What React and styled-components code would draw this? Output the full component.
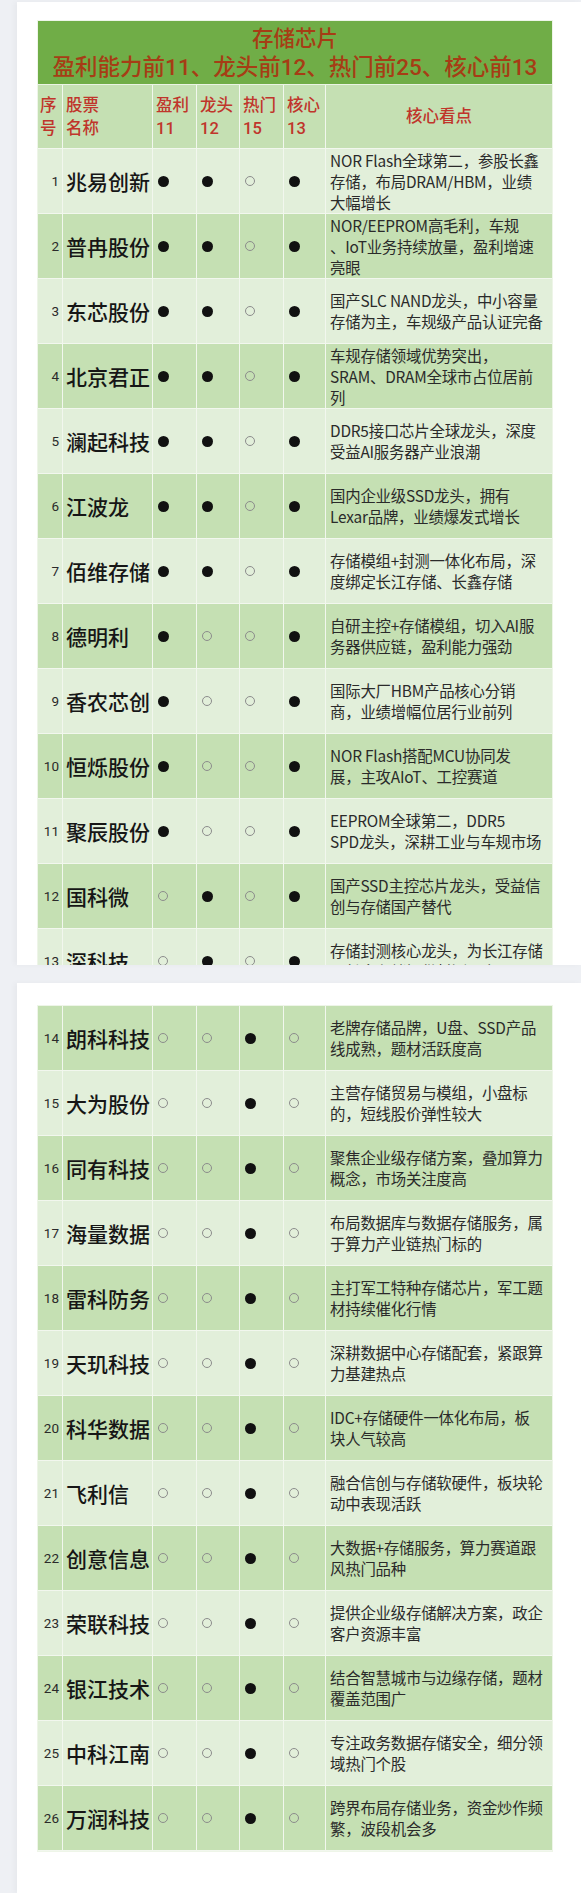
import React from "react";
import styled, { createGlobalStyle } from "styled-components";

const Global = createGlobalStyle`
  html, body { margin: 0; padding: 0; background: #eef0f4; }
  body { font-family: Roboto, "Noto Sans CJK SC", sans-serif; }
`;

const Page = styled.div`
  width: 581px;
  padding: 2px 0 0 17px;
  box-sizing: border-box;
  display: flex;
  flex-direction: column;
  gap: 18px;
`;

const Panel = styled.section`
  background: #ffffff;
  height: ${(p) => p.$h}px;
  overflow: hidden;
  padding: ${(p) => p.$top}px 0 0 20px;
  box-sizing: border-box;
  box-shadow: -3px 0 5px rgba(0, 0, 0, 0.03);
`;

const Table = styled.div`
  width: 516px;
  border: 1px solid #eef5e8;
  box-sizing: border-box;
`;

const TitleBand = styled.div`
  background: #70ad47;
  height: 64px;
  display: flex;
  flex-direction: column;
  align-items: center;
  justify-content: center;
  color: #a63d15;
  font-family: Roboto, "Noto Sans CJK SC", sans-serif;
  font-weight: 500;
  border-bottom: 1px solid #eaf3e3;
  box-sizing: border-box;
`;

const TitleLine = styled.div`
  font-size: ${(p) => p.$size}px;
  line-height: 28px;
  white-space: nowrap;
`;

const Row = styled.div`
  display: grid;
  grid-template-columns: 25px 90px 44px 43px 44px 42px 1fr;
  height: ${(p) => p.$h || 65}px;
  background: ${(p) => (p.$light ? "#e2efda" : "#c5e0b3")};
  border-bottom: 1px solid #f2f7ee;
  box-sizing: border-box;
`;

const Cell = styled.div`
  border-right: 1px solid #f2f7ee;
  box-sizing: border-box;
  display: flex;
  align-items: center;
  overflow: hidden;
  &:last-child { border-right: none; }
`;

const HeadCell = styled(Cell)`
  color: #c0352b;
  font-size: 16.5px;
  font-weight: 500;
  line-height: 23px;
  padding-left: ${(p) => p.$pad ?? 3}px;
  justify-content: ${(p) => (p.$center ? "center" : "flex-start")};
  white-space: pre-line;
`;

const IndexCell = styled(Cell)`
  justify-content: flex-end;
  padding-right: 3px;
  font-size: 13.5px;
  color: #2a2a2a;
`;

const NameCell = styled(Cell)`
  padding-left: 3px;
  font-family: "Noto Sans CJK SC", sans-serif;
  font-size: 21px;
  font-weight: 500;
  color: #161616;
  white-space: nowrap;
`;

const MarkCell = styled(Cell)`
  padding-left: 5px;
`;

const Dot = styled.span`
  display: block;
  box-sizing: border-box;
  border-radius: 50%;
  width: ${(p) => (p.$on ? 11 : 10)}px;
  height: ${(p) => (p.$on ? 11 : 10)}px;
  background: ${(p) => (p.$on ? "#111" : "transparent")};
  border: ${(p) => (p.$on ? "none" : "1.2px solid #8c8c8c")};
`;

const NoteCell = styled(Cell)`
  padding: 0 3px 0 4px;
  flex-direction: column;
  align-items: flex-start;
  justify-content: center;
  font-family: "Noto Sans CJK SC", Roboto, sans-serif;
  font-size: 15.4px;
  line-height: 21px;
  color: #2a2a2a;
  letter-spacing: -0.2px;
`;

const NoteLine = styled.div`
  white-space: nowrap;
`;

const rows = [
  [1, "兆易创新", "1101", ["NOR Flash全球第二，参股长鑫", "存储，布局DRAM/HBM，业绩", "大幅增长"]],
  [2, "普冉股份", "1101", ["NOR/EEPROM高毛利，车规", "、IoT业务持续放量，盈利增速", "亮眼"]],
  [3, "东芯股份", "1101", ["国产SLC NAND龙头，中小容量", "存储为主，车规级产品认证完备"]],
  [4, "北京君正", "1101", ["车规存储领域优势突出，", "SRAM、DRAM全球市占位居前", "列"]],
  [5, "澜起科技", "1101", ["DDR5接口芯片全球龙头，深度", "受益AI服务器产业浪潮"]],
  [6, "江波龙", "1101", ["国内企业级SSD龙头，拥有", "Lexar品牌，业绩爆发式增长"]],
  [7, "佰维存储", "1101", ["存储模组+封测一体化布局，深", "度绑定长江存储、长鑫存储"]],
  [8, "德明利", "1001", ["自研主控+存储模组，切入AI服", "务器供应链，盈利能力强劲"]],
  [9, "香农芯创", "1001", ["国际大厂HBM产品核心分销", "商，业绩增幅位居行业前列"]],
  [10, "恒烁股份", "1001", ["NOR Flash搭配MCU协同发", "展，主攻AIoT、工控赛道"]],
  [11, "聚辰股份", "1001", ["EEPROM全球第二，DDR5", "SPD龙头，深耕工业与车规市场"]],
  [12, "国科微", "0101", ["国产SSD主控芯片龙头，受益信", "创与存储国产替代"]],
  [13, "深科技", "0101", ["存储封测核心龙头，为长江存储", "、长鑫存储提供封测配套"]],
  [14, "朗科科技", "0010", ["老牌存储品牌，U盘、SSD产品", "线成熟，题材活跃度高"]],
  [15, "大为股份", "0010", ["主营存储贸易与模组，小盘标", "的，短线股价弹性较大"]],
  [16, "同有科技", "0010", ["聚焦企业级存储方案，叠加算力", "概念，市场关注度高"]],
  [17, "海量数据", "0010", ["布局数据库与数据存储服务，属", "于算力产业链热门标的"]],
  [18, "雷科防务", "0010", ["主打军工特种存储芯片，军工题", "材持续催化行情"]],
  [19, "天玑科技", "0010", ["深耕数据中心存储配套，紧跟算", "力基建热点"]],
  [20, "科华数据", "0010", ["IDC+存储硬件一体化布局，板", "块人气较高"]],
  [21, "飞利信", "0010", ["融合信创与存储软硬件，板块轮", "动中表现活跃"]],
  [22, "创意信息", "0010", ["大数据+存储服务，算力赛道跟", "风热门品种"]],
  [23, "荣联科技", "0010", ["提供企业级存储解决方案，政企", "客户资源丰富"]],
  [24, "银江技术", "0010", ["结合智慧城市与边缘存储，题材", "覆盖范围广"]],
  [25, "中科江南", "0010", ["专注政务数据存储安全，细分领", "域热门个股"]],
  [26, "万润科技", "0010", ["跨界布局存储业务，资金炒作频", "繁，波段机会多"]],
];

function StockRow({ data }) {
  const [n, name, marks, notes] = data;
  return (
    <Row $light={n % 2 === 1}>
      <IndexCell>{n}</IndexCell>
      <NameCell>{name}</NameCell>
      {marks.split("").map((m, i) => (
        <MarkCell key={i}>
          <Dot $on={m === "1"} />
        </MarkCell>
      ))}
      <NoteCell>
        {notes.map((t, i) => (
          <NoteLine key={i}>{t}</NoteLine>
        ))}
      </NoteCell>
    </Row>
  );
}

export default function App() {
  return (
    <>
      <Global />
      <Page>
        <Panel $h={963} $top={18}>
          <Table>
            <TitleBand>
              <TitleLine $size={21.5}>存储芯片</TitleLine>
              <TitleLine $size={22.5}>盈利能力前11、龙头前12、热门前25、核心前13</TitleLine>
            </TitleBand>
            <Row $h={64}>
              <HeadCell $pad={2}>{"序\n号"}</HeadCell>
              <HeadCell>{"股票\n名称"}</HeadCell>
              <HeadCell>{"盈利\n11"}</HeadCell>
              <HeadCell>{"龙头\n12"}</HeadCell>
              <HeadCell>{"热门\n15"}</HeadCell>
              <HeadCell>{"核心\n13"}</HeadCell>
              <HeadCell $center $pad={0}>核心看点</HeadCell>
            </Row>
            {rows.slice(0, 13).map((r) => (
              <StockRow key={r[0]} data={r} />
            ))}
          </Table>
        </Panel>
        <Panel $h={910} $top={22}>
          <Table>
            {rows.slice(13).map((r) => (
              <StockRow key={r[0]} data={r} />
            ))}
          </Table>
        </Panel>
      </Page>
    </>
  );
}
